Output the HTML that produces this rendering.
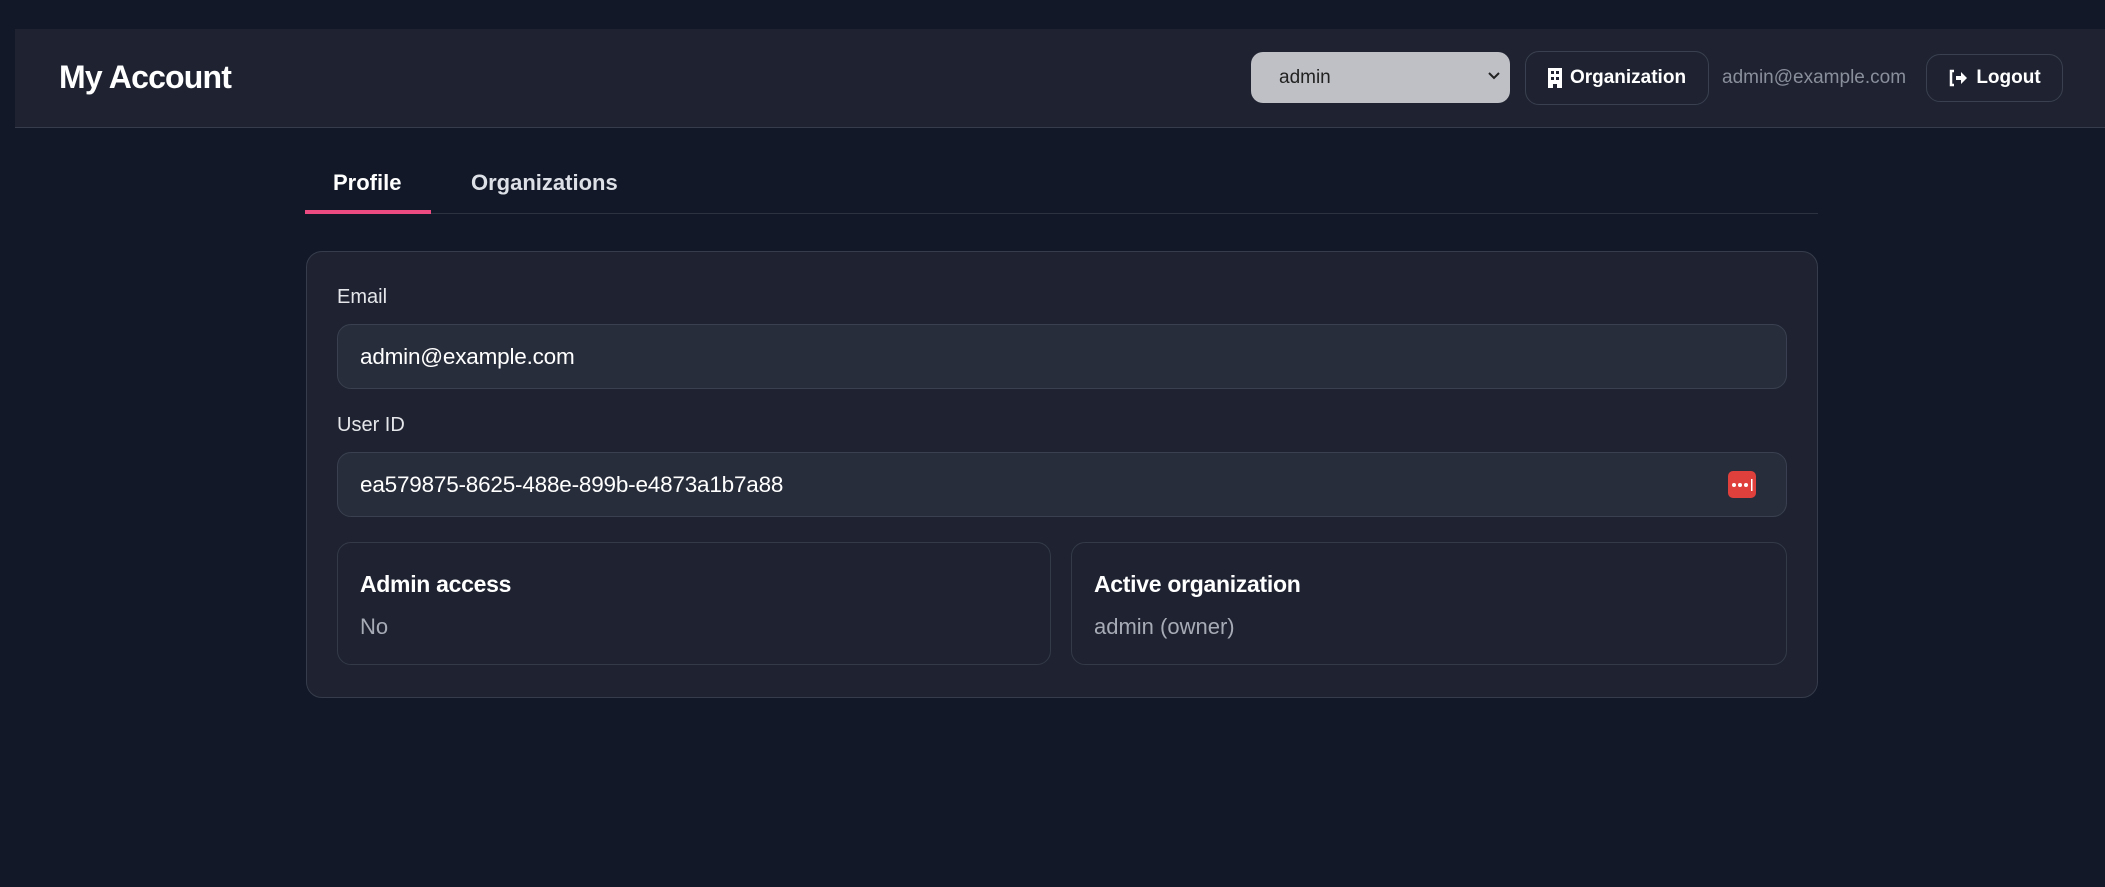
<!DOCTYPE html>
<html><head><meta charset="utf-8"><style>
*{box-sizing:border-box;margin:0;padding:0}
body{width:2105px;height:887px;background:#121827;font-family:"Liberation Sans",sans-serif;color:#fff;position:relative;overflow:hidden}
.hdr{position:absolute;left:15px;top:29px;right:0;height:99px;background:#1f2331;border-bottom:1px solid #363c4b}
.title{position:absolute;left:59px;top:59px;font-size:32px;font-weight:bold;letter-spacing:-0.8px}
.sel{position:absolute;left:1251px;top:52px;width:259px;height:51px;background:#bfc0c6;border-radius:12px;color:#222;font-size:19px;padding:15px 0 0 28px}
.sel svg{position:absolute;right:10px;top:20px}
.btn{position:absolute;border:1px solid #3a4050;border-radius:14px;font-size:19px;font-weight:bold;display:flex;align-items:center;justify-content:center;gap:8px}
.mail{position:absolute;left:1722px;top:67px;font-size:19px;color:#8a8f9c}
.tab{position:absolute;top:170px;font-size:22px;font-weight:bold}
.card{position:absolute;left:306px;top:251px;width:1512px;height:447px;background:#1f2331;border:1px solid #363c4b;border-radius:16px}
.lbl{position:absolute;left:337px;font-size:20px;color:#e4e6ea}
.inp{position:absolute;left:337px;width:1450px;height:65px;background:#282d3b;border:1px solid #3a4050;border-radius:14px;font-size:22.5px;padding:19px 0 0 22px;letter-spacing:-0.2px}
.box{position:absolute;top:542px;height:123px;border:1px solid #343a48;border-radius:14px;padding:28px 0 0 22px}
.box b{display:block;font-size:23px;letter-spacing:-0.3px}
.box span{display:block;font-size:22px;color:#a6abb6;margin-top:16px}
</style></head><body>
<div class="hdr"></div>
<div class="title">My Account</div>
<div class="sel">admin<svg width="12" height="8" viewBox="0 0 12 8"><path d="M1 1l5 5 5-5" stroke="#222" stroke-width="2" fill="none"/></svg></div>
<div class="btn" style="left:1525px;top:51px;width:184px;height:54px"><svg width="14" height="20" viewBox="0 0 14 20"><path d="M0 0h14v20H9v-4H5v4H0z" fill="#fff"/><rect x="3" y="3" width="3" height="3" fill="#1f2331"/><rect x="8" y="3" width="3" height="3" fill="#1f2331"/><rect x="3" y="9" width="3" height="3" fill="#1f2331"/><rect x="8" y="9" width="3" height="3" fill="#1f2331"/></svg>Organization</div>
<div class="mail">admin@example.com</div>
<div class="btn" style="left:1926px;top:54px;width:137px;height:48px"><svg width="20" height="18" viewBox="0 0 20 18"><path d="M6 2H3v14h3" stroke="#fff" stroke-width="2.5" fill="none"/><path d="M8 7h5V3l6 6-6 6v-4H8z" fill="#fff"/></svg>Logout</div>
<div class="tab" style="left:333px">Profile</div>
<div class="tab" style="left:471px;color:#dde0e6">Organizations</div>
<div style="position:absolute;left:306px;top:213px;width:1512px;height:1px;background:#2c3240"></div>
<div style="position:absolute;left:305px;top:210px;width:126px;height:4px;background:#ec4b82"></div>
<div class="card"></div>
<div class="lbl" style="top:286px">Email</div>
<div class="inp" style="top:324px">admin@example.com</div>
<div class="lbl" style="top:414px">User ID</div>
<div class="inp" style="top:452px">ea579875-8625-488e-899b-e4873a1b7a88</div>
<div style="position:absolute;left:1728px;top:471px;width:28px;height:27px;background:#e0403c;border-radius:5px"><svg width="28" height="27"><circle cx="6" cy="14" r="2" fill="#fff"/><circle cx="12" cy="14" r="2" fill="#fff"/><circle cx="18" cy="14" r="2" fill="#fff"/><rect x="23" y="8" width="1.5" height="12" fill="#fff"/></svg></div>
<div class="box" style="left:337px;width:714px"><b>Admin access</b><span>No</span></div>
<div class="box" style="left:1071px;width:716px"><b>Active organization</b><span>admin (owner)</span></div>
</body></html>
